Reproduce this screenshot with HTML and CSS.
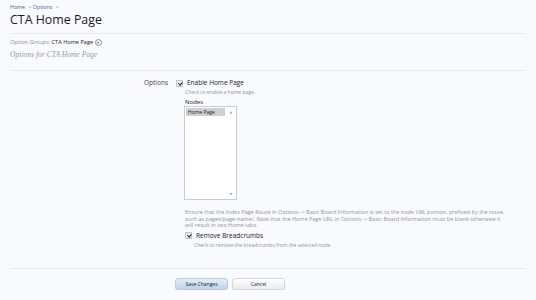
FILE: index.html
```html
<!doctype html>
<html>
  <head>
    <meta charset="utf-8">
    <link rel="stylesheet" href="styles.css">
  </head>

  <body>
    <div id="content">
      <div class="breadcrumb">
        <a href="#">Home</a> &gt;
        <a href="#">Options</a> &gt;
      </div>
      <h1 class="titleBar">CTA Home Page</h1>

      <div class="groupChooser">
        Option Groups: <span class="groupName">CTA Home Page</span>
        <span class="chooserIcon">&#9662;</span>
      </div>
      <p class="groupDescription">Options for CTA Home Page</p>

      <form class="optionsForm">
        <dl class="ctrlUnit">
          <dt>Options</dt>
          <dd>
            <label class="checkRow"><span class="box checked"></span>Enable Home Page</label>
            <p class="explain">Check to enable a home page.</p>

            <div class="nodesLabel">Nodes</div>
            <div class="listBox">
              <div class="listItems">
                <div class="listItem selected">Home Page</div>
              </div>
              <div class="scrollTrack">
                <span class="arrow">&#9650;</span>
                <span class="arrow">&#9660;</span>
              </div>
            </div>
            <p class="explain long">Ensure that the Index Page Route in Options -&gt; Basic Board Information is set to the node URL portion, prefixed by the route, such as pages/page-name/. Note that the Home Page URL in Options -&gt; Basic Board Information must be blank otherwise it will result in two Home tabs.</p>

            <label class="checkRow nested"><span class="box checked"></span>Remove Breadcrumbs</label>
            <p class="explain indent">Check to remove the breadcrumbs from the selected node.</p>
          </dd>
        </dl>

        <dl class="ctrlUnit submitUnit">
          <dt></dt>
          <dd class="buttons">
            <button type="button" class="button primary">Save Changes</button>
            <button type="button" class="button">Cancel</button>
          </dd>
        </dl>
      </form>
    </div>
  </body>
</html>
```

FILE: styles.css
```css
body {
  margin:0;
  background-color:#f9fafd;
  font-family:"Open Sans", "DejaVu Sans", sans-serif;
  color:#222;
}

#content {
  padding:4px 10px 0 10px;
}

.breadcrumb {
  font-size:5.3px;
  line-height:7px;
  color:#6c85a6;
}

.breadcrumb a {
  color:#3e5f8c;
  text-decoration:none;
  margin-right:2px;
}

.titleBar {
  margin:0;
  padding:1px 0 5px 0;
  font-size:12.4px;
  line-height:16px;
  font-weight:400;
  color:#1a1a1a;
  border-bottom:1px solid #e6e9ef;
}

.groupChooser {
  margin-top:4px;
  font-size:5.6px;
  line-height:8px;
  color:#8a8f99;
}

.groupName {
  color:#222;
}

.chooserIcon {
  display:inline-block;
  width:5px;
  height:5px;
  line-height:5px;
  border:1px solid #8a8f99;
  border-radius:50%;
  font-size:4px;
  text-align:center;
  vertical-align:middle;
  color:#555;
}

.groupDescription {
  margin:4px 0 0 0;
  font-family:"Liberation Serif", serif;
  font-style:italic;
  font-size:7.6px;
  line-height:10px;
  color:#9a9a9a;
  padding-bottom:10px;
  border-bottom:1px solid #e6e9ef;
}

.optionsForm {
  margin:0;
}

.ctrlUnit {
  display:flex;
  margin:0;
  padding-top:6px;
}

.ctrlUnit dt {
  width:158px;
  text-align:right;
  font-size:6.5px;
  line-height:12px;
  color:#444;
}

.ctrlUnit dd {
  margin:0 0 0 8px;
  flex:1;
}

.checkRow {
  display:flex;
  align-items:center;
  font-size:6.5px;
  line-height:12px;
  color:#222;
}

.checkRow.nested {
  margin-left:9px;
}

.box {
  width:5px;
  height:5px;
  border:1px solid #c3c6cc;
  background-color:#e7e9ec;
  margin-right:4px;
  position:relative;
}

.box.checked::after {
  content:"";
  position:absolute;
  left:1.5px;
  top:0;
  width:1.5px;
  height:3px;
  border-right:1px solid #222;
  border-bottom:1px solid #222;
  transform:rotate(40deg);
}

.explain {
  margin:0 0 0 9px;
  font-size:5px;
  line-height:7px;
  color:#909399;
}

.explain.long {
  margin:9px 0 1px 9px;
  max-width:324px;
  font-size:5.5px;
  line-height:6.5px;
}

.explain.indent {
  margin-left:18px;
}

.nodesLabel {
  margin:2px 0 0 9px;
  font-size:6px;
  line-height:8px;
  color:#222;
}

.listBox {
  display:flex;
  margin-left:8px;
  width:51px;
  height:92px;
  border:1px solid #c9ccd1;
  background-color:#fff;
}

.listItems {
  flex:1;
  padding:1px;
}

.listItem {
  font-size:5px;
  line-height:8px;
  padding-left:2px;
  color:#222;
}

.listItem.selected {
  background-color:#cfcfcf;
}

.scrollTrack {
  width:10px;
  display:flex;
  flex-direction:column;
  justify-content:space-between;
  align-items:center;
  padding:3px 0;
  font-size:3px;
  color:#999;
}

.submitUnit {
  margin-top:19px;
  padding-top:9px;
  border-top:1px solid #e6e9ef;
}

.ctrlUnit dd.buttons {
  display:flex;
  gap:4px;
  margin-left:7px;
}

.button {
  width:53px;
  height:12px;
  padding:0;
  font-family:"Open Sans", "DejaVu Sans", sans-serif;
  font-size:5px;
  color:#222;
  border:1px solid #d4d8de;
  border-radius:3px;
  background:linear-gradient(#ffffff, #e9ebef);
  box-shadow:0 1px 1px rgba(0,0,0,0.12);
}

.button.primary {
  background:linear-gradient(#e3eef9, #bfd4ea);
  border-color:#b9cbe0;
}
```
